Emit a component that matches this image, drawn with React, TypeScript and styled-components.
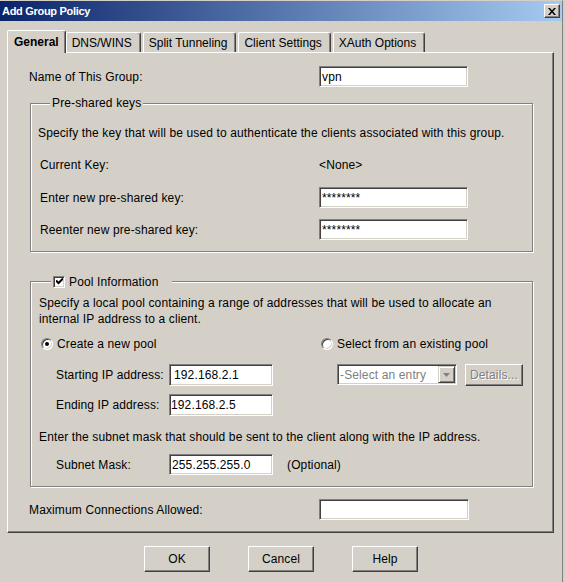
import React from "react";
import styled, { createGlobalStyle, css } from "styled-components";

const GlobalStyle = createGlobalStyle`
  html, body { margin: 0; padding: 0; background: #d4d0c8; }
  body {
    font-family: "Liberation Sans", Arial, sans-serif;
    font-size: 12px;
    color: #000;
  }
  * { box-sizing: border-box; }
`;

const Window = styled.div`
  width: 563px;
  height: 582px;
  background: #d4d0c8;
  border-top: 1px solid #d4d0c8;
  border-right: 1px solid #808080;
  display: flex;
  flex-direction: column;
  overflow: hidden;
`;

const TitleBar = styled.div`
  height: 20px;
  flex: none;
  display: flex;
  align-items: center;
  justify-content: space-between;
  padding: 0 2px 0 2px;
  background: linear-gradient(to right, #0a246a, #a6caf0);
`;

const Title = styled.span`
  color: #fff;
  font-weight: bold;
  font-size: 11px;
  letter-spacing: -0.3px;
`;

const CloseButton = styled.div`
  width: 16px;
  height: 14px;
  display: flex;
  align-items: center;
  justify-content: center;
  background: #d4d0c8;
  border: 1px solid;
  border-color: #fff #404040 #404040 #fff;
  box-shadow: inset -1px -1px 0 #808080;
`;

const TabStrip = styled.div`
  flex: none;
  height: 22px;
  margin-top: 9px;
  padding-left: 7px;
  display: flex;
  align-items: flex-end;
`;

const Tab = styled.div<{ $active?: boolean }>`
  height: 20px;
  padding: 0 8px 0 5px;
  margin-right: 2px;
  display: flex;
  align-items: center;
  white-space: nowrap;
  background: #d4d0c8;
  border-left: 1px solid #fff;
  border-top: 1px solid #fff;
  border-right: 1px solid #404040;
  border-radius: 2px 3px 0 0;
  box-shadow: inset -1px 0 0 #808080;
  ${(p) =>
    p.$active &&
    css`
      height: 23px;
      margin-bottom: -1px;
      margin-right: 0;
      padding: 0 6px 0 6px;
      font-weight: bold;
      position: relative;
      z-index: 1;
    `}
`;

const Panel = styled.div`
  flex: none;
  margin-left: 7px;
  width: 547px;
  height: 481px;
  border-top: 1px solid #fff;
  border-left: 1px solid #fff;
  border-right: 1px solid #404040;
  border-bottom: 1px solid #404040;
  box-shadow: inset -1px -1px 0 #808080;
  padding: 13px 0 0 21px;
  display: flex;
  flex-direction: column;
  letter-spacing: 0.13px;
`;

const Row = styled.div<{ $cols: string; $top?: number; $h?: number; $indent?: number }>`
  display: grid;
  grid-template-columns: ${(p) => p.$cols};
  align-items: center;
  height: ${(p) => p.$h ?? 21}px;
  margin-top: ${(p) => p.$top ?? 0}px;
  padding-left: ${(p) => p.$indent ?? 0}px;
  white-space: nowrap;
`;

const Label = styled.span`
  line-height: 14px;
`;

const TextField = styled.input<{ $width: number; $h?: number; $pad?: number }>`
  width: ${(p) => p.$width}px;
  height: ${(p) => p.$h ?? 21}px;
  margin: 0;
  padding: 0 0 0 ${(p) => p.$pad ?? 2}px;
  font: inherit;
  letter-spacing: inherit;
  color: #000;
  background: #fff;
  border: 1px solid;
  border-color: #808080 #fff #fff #808080;
  box-shadow: inset 1px 1px 0 #404040, inset -1px -1px 0 #d4d0c8;
  outline: none;
  border-radius: 0;
`;

const Group = styled.fieldset<{ $top: number; $padLeft: number; $padTop: number; $padBottom: number }>`
  margin: ${(p) => p.$top}px 0 0 1px;
  width: 503px;
  min-inline-size: 0;
  padding: ${(p) => p.$padTop}px 0 ${(p) => p.$padBottom}px ${(p) => p.$padLeft}px;
  border: 1px solid #808080;
  box-shadow: 1px 1px 0 #fff, inset 1px 1px 0 #fff;
  display: flex;
  flex-direction: column;
`;

const Legend = styled.legend<{ $padRight?: number }>`
  margin-left: 12px;
  padding: 0 ${(p) => p.$padRight ?? 2}px 0 2px;
  line-height: 14px;
  height: 14px;
  background: #d4d0c8;
  float: none;
`;

const LegendInner = styled.span`
  display: inline-flex;
  align-items: center;
  gap: 4px;
  height: 14px;
`;

const CheckBox = styled.span`
  width: 12px;
  height: 12px;
  display: inline-flex;
  align-items: center;
  justify-content: center;
  background: #fff;
  border: 1px solid;
  border-color: #808080 #fff #fff #808080;
  box-shadow: inset 1px 1px 0 #404040, inset -1px -1px 0 #d4d0c8;
`;

const Note = styled.div<{ $top?: number; $lh: number }>`
  margin-top: ${(p) => p.$top ?? 0}px;
  line-height: ${(p) => p.$lh}px;
  white-space: nowrap;
`;

const RadioOption = styled.span`
  display: inline-flex;
  align-items: center;
  gap: 4px;
  height: 16px;
`;

const Radio = styled.span<{ $checked?: boolean }>`
  width: 12px;
  height: 12px;
  border-radius: 50%;
  background: #fff;
  border: 1px solid;
  border-color: #808080 #fff #fff #808080;
  box-shadow: inset 1px 1px 0 #404040, inset -1px -1px 0 #d4d0c8;
  display: inline-flex;
  align-items: center;
  justify-content: center;
  &::after {
    content: "";
    width: 4px;
    height: 4px;
    border-radius: 50%;
    background: ${(p) => (p.$checked ? "#000" : "transparent")};
  }
`;

const IpRow = styled.div<{ $top: number }>`
  display: flex;
  align-items: flex-start;
  margin-top: ${(p) => p.$top}px;
  padding-left: 17px;
  white-space: nowrap;
`;

const IpLabel = styled.span`
  width: 113px;
  height: 22px;
  display: flex;
  align-items: center;
`;

const Select = styled.div`
  margin-left: 64px;
  width: 120px;
  height: 21px;
  display: flex;
  align-items: center;
  justify-content: space-between;
  padding: 0 1px 0 2px;
  background: #fff;
  color: #808080;
  border: 1px solid;
  border-color: #808080 #fff #fff #808080;
  box-shadow: inset 1px 1px 0 #404040, inset -1px -1px 0 #d4d0c8;
`;

const ArrowButton = styled.span`
  width: 17px;
  height: 17px;
  display: flex;
  align-items: center;
  justify-content: center;
  background: #d4d0c8;
  border: 1px solid;
  border-color: #d4d0c8 #404040 #404040 #d4d0c8;
  box-shadow: inset 1px 1px 0 #fff, inset -1px -1px 0 #808080;
`;

const Button = styled.button<{ $width: number; $h: number; $disabled?: boolean }>`
  width: ${(p) => p.$width}px;
  height: ${(p) => p.$h}px;
  margin: 0;
  padding: 0;
  font: inherit;
  letter-spacing: 0.13px;
  color: ${(p) => (p.$disabled ? "#808080" : "#000")};
  text-shadow: ${(p) => (p.$disabled ? "1px 1px 0 #fff" : "none")};
  background: #d4d0c8;
  border: 1px solid;
  border-color: #fff #404040 #404040 #fff;
  box-shadow: inset -1px -1px 0 #808080;
  border-radius: 0;
`;

const DetailsButton = styled(Button)`
  margin-left: 8px;
`;

const Optional = styled.span`
  margin-left: 14px;
`;

const SubnetRow = styled.div`
  display: flex;
  align-items: center;
  margin-top: 9px;
  padding-left: 17px;
  height: 21px;
  white-space: nowrap;
`;

const ButtonBar = styled.div`
  flex: none;
  margin-top: 13px;
  display: flex;
  justify-content: center;
  gap: 38px;
`;

const tabs = ["General", "DNS/WINS", "Split Tunneling", "Client Settings", "XAuth Options"];

export default function App() {
  return (
    <>
      <GlobalStyle />
      <Window>
        <TitleBar>
          <Title>Add Group Policy</Title>
          <CloseButton>
            <svg width="8" height="7" viewBox="0 0 8 7">
              <path d="M0 0h2l2 2.4L6 0h2L5 3.5 8 7H6L4 4.6 2 7H0l3-3.5z" fill="#000" />
            </svg>
          </CloseButton>
        </TitleBar>

        <TabStrip>
          {tabs.map((t, i) => (
            <Tab key={t} $active={i === 0}>
              {t}
            </Tab>
          ))}
        </TabStrip>

        <Panel>
          <Row $cols="290px 149px">
            <Label>Name of This Group:</Label>
            <TextField $width={149} defaultValue="vpn" />
          </Row>

          <Group $top={9} $padLeft={7} $padTop={16} $padBottom={11}>
            <Legend>Pre-shared keys</Legend>
            <Note $lh={14}>
              Specify the key that will be used to authenticate the clients associated with this group.
            </Note>
            <Row $cols="279px 149px" $top={14} $indent={2}>
              <Label>Current Key:</Label>
              <Label>&lt;None&gt;</Label>
            </Row>
            <Row $cols="279px 149px" $top={12} $indent={2}>
              <Label>Enter new pre-shared key:</Label>
              <TextField $width={149} defaultValue="********" />
            </Row>
            <Row $cols="279px 149px" $top={11} $indent={2}>
              <Label>Reenter new pre-shared key:</Label>
              <TextField $width={149} defaultValue="********" />
            </Row>
          </Group>

          <Group $top={22} $padLeft={8} $padTop={7} $padBottom={11}>
            <Legend $padRight={14}>
              <LegendInner>
                <CheckBox>
                  <svg width="7" height="7" viewBox="0 0 7 7">
                    <path d="M0 2.5 L2.5 5 L7 0.5" fill="none" stroke="#000" strokeWidth="2" />
                  </svg>
                </CheckBox>
                Pool Information
              </LegendInner>
            </Legend>
            <Note $lh={16}>
              Specify a local pool containing a range of addresses that will be used to allocate an
              <br />
              internal IP address to a client.
            </Note>
            <Row $cols="280px auto" $top={9} $h={16} $indent={2}>
              <RadioOption>
                <Radio $checked />
                Create a new pool
              </RadioOption>
              <RadioOption>
                <Radio />
                Select from an existing pool
              </RadioOption>
            </Row>
            <IpRow $top={12}>
              <IpLabel>Starting IP address:</IpLabel>
              <TextField $width={104} $h={22} $pad={4} defaultValue="192.168.2.1" />
              <Select>
                -Select an entry
                <ArrowButton>
                  <svg width="7" height="4" viewBox="0 0 7 4">
                    <path d="M0 0h7L3.5 4z" fill="#808080" />
                  </svg>
                </ArrowButton>
              </Select>
              <DetailsButton $width={58} $h={22} $disabled>
                Details...
              </DetailsButton>
            </IpRow>
            <IpRow $top={8}>
              <IpLabel>Ending IP address:</IpLabel>
              <TextField $width={104} $h={22} $pad={1} defaultValue="192.168.2.5" />
            </IpRow>
            <Note $lh={16} $top={13}>
              Enter the subnet mask that should be sent to the client along with the IP address.
            </Note>
            <SubnetRow>
              <IpLabel>Subnet Mask:</IpLabel>
              <TextField $width={104} defaultValue="255.255.255.0" />
              <Optional>(Optional)</Optional>
            </SubnetRow>
          </Group>

          <Row $cols="290px 150px" $top={12}>
            <Label>Maximum Connections Allowed:</Label>
            <TextField $width={150} defaultValue="" />
          </Row>
        </Panel>

        <ButtonBar>
          <Button $width={66} $h={26}>OK</Button>
          <Button $width={66} $h={26}>Cancel</Button>
          <Button $width={66} $h={26}>Help</Button>
        </ButtonBar>
      </Window>
    </>
  );
}
